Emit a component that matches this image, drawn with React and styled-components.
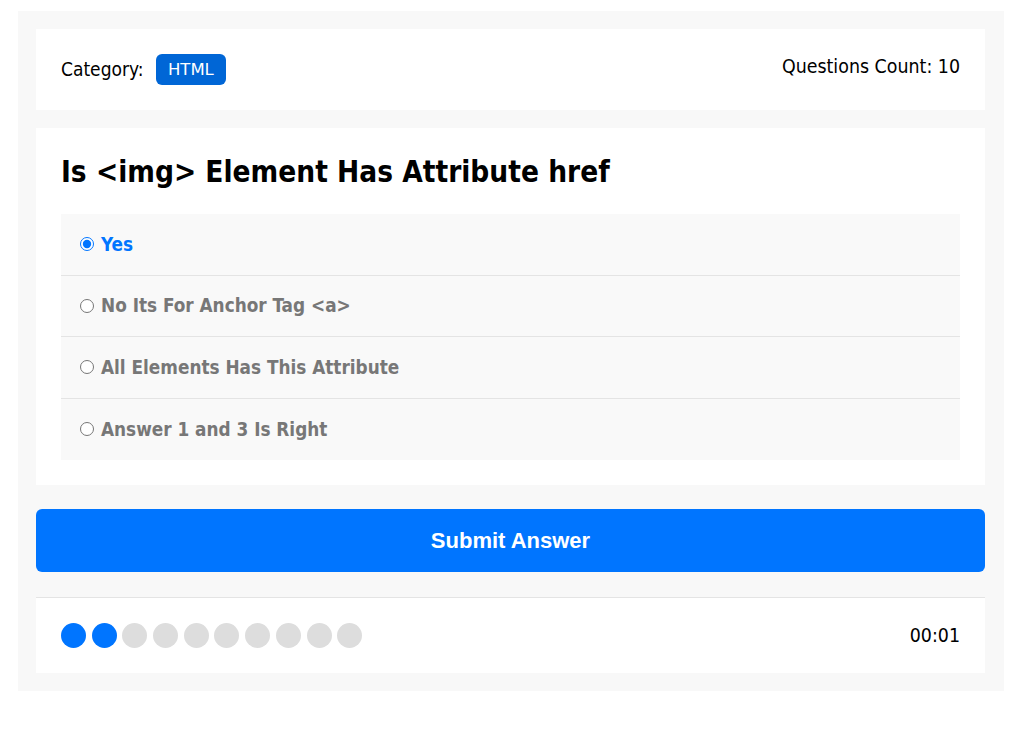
import React from "react";
import styled, { createGlobalStyle } from "styled-components";

const GlobalStyle = createGlobalStyle`
  * {
    box-sizing: border-box;
  }
  body {
    margin: 0;
    background: #fff;
    font-family: "DejaVu Sans Condensed", "DejaVu Sans", sans-serif;
  }
`;

const answers = [
  "Yes",
  "No Its For Anchor Tag <a>",
  "All Elements Has This Attribute",
  "Answer 1 and 3 Is Right"
];

class App extends React.Component {
  state = { selected: 0 };

  render() {
    const { selected } = this.state;
    return (
      <>
        <GlobalStyle />
        <Quiz>
          <Info>
            <Category>
              Category: <Badge>HTML</Badge>
            </Category>
            <Count>Questions Count: 10</Count>
          </Info>
          <QuestionBox>
            <Title>Is &lt;img&gt; Element Has Attribute href</Title>
            <Answers>
              {answers.map((text, i) => (
                <Answer key={i}>
                  <input
                    type="radio"
                    name="question"
                    id={`answer_${i}`}
                    checked={selected === i}
                    onChange={() => this.setState({ selected: i })}
                  />
                  <Label htmlFor={`answer_${i}`} active={selected === i}>
                    {text}
                  </Label>
                </Answer>
              ))}
            </Answers>
          </QuestionBox>
          <Submit>Submit Answer</Submit>
          <Bullets>
            <Spans>
              {Array.from({ length: 10 }).map((_, i) => (
                <Dot key={i} on={i < 2 ? 1 : 0} />
              ))}
            </Spans>
            <Countdown>00:01</Countdown>
          </Bullets>
        </Quiz>
      </>
    );
  }
}

export default App;

const Quiz = styled.div`
  width: 986px;
  margin: 11px 0 0 18px;
  padding: 18px 19px 18px 18px;
  background: #f8f8f8;
`;

const Info = styled.div`
  display: flex;
  justify-content: space-between;
  height: 81px;
  padding: 25px 25px;
  background: #fff;
  color: #000;
`;

const Category = styled.div`
  font-size: 19px;
  line-height: 31px;
`;

const Badge = styled.span`
  display: inline-block;
  height: 31px;
  margin-left: 7px;
  padding: 0 12px;
  border-radius: 6px;
  background: #0066d6;
  color: #fff;
  font-size: 16.5px;
  line-height: 31px;
  font-family: "DejaVu Sans", sans-serif;
  vertical-align: top;
`;

const Count = styled.div`
  font-size: 19.4px;
  line-height: 26px;
`;

const QuestionBox = styled.div`
  margin-top: 18px;
  padding: 25px;
  background: #fff;
`;

const Title = styled.h2`
  margin: 2px 0 24px;
  font-size: 29.5px;
  line-height: 35px;
  font-weight: bold;
  color: #000;
`;

const Answers = styled.div`
  background: #f9f9f9;
`;

const Answer = styled.div`
  display: flex;
  align-items: center;
  height: 61.5px;
  padding: 0 15px;

  &:not(:last-child) {
    border-bottom: 1px solid #e4e4e4;
  }

  input {
    margin: 0 3px 0 4px;
    width: 14px;
    height: 14px;
  }
`;

const Label = styled.label`
  margin-left: 4px;
  font-size: 18.8px;
  font-weight: bold;
  color: ${(p) => (p.active ? "#0075ff" : "#777")};
  cursor: pointer;
`;

const Submit = styled.button`
  display: block;
  width: 100%;
  height: 63px;
  margin-top: 24px;
  border: none;
  border-radius: 6px;
  background: #0075ff;
  color: #fff;
  font-family: "Liberation Sans", Arial, sans-serif;
  font-size: 22px;
  font-weight: bold;
  cursor: pointer;
`;

const Bullets = styled.div`
  display: flex;
  justify-content: space-between;
  align-items: center;
  margin-top: 25px;
  padding: 25px;
  border-top: 1px solid #e4e4e4;
  background: #fff;
`;

const Spans = styled.div`
  display: flex;
  gap: 5.7px;
`;

const Dot = styled.span`
  width: 25px;
  height: 25px;
  border-radius: 50%;
  background: ${(p) => (p.on ? "#0075ff" : "#ddd")};
`;

const Countdown = styled.div`
  font-size: 19.4px;
`;
